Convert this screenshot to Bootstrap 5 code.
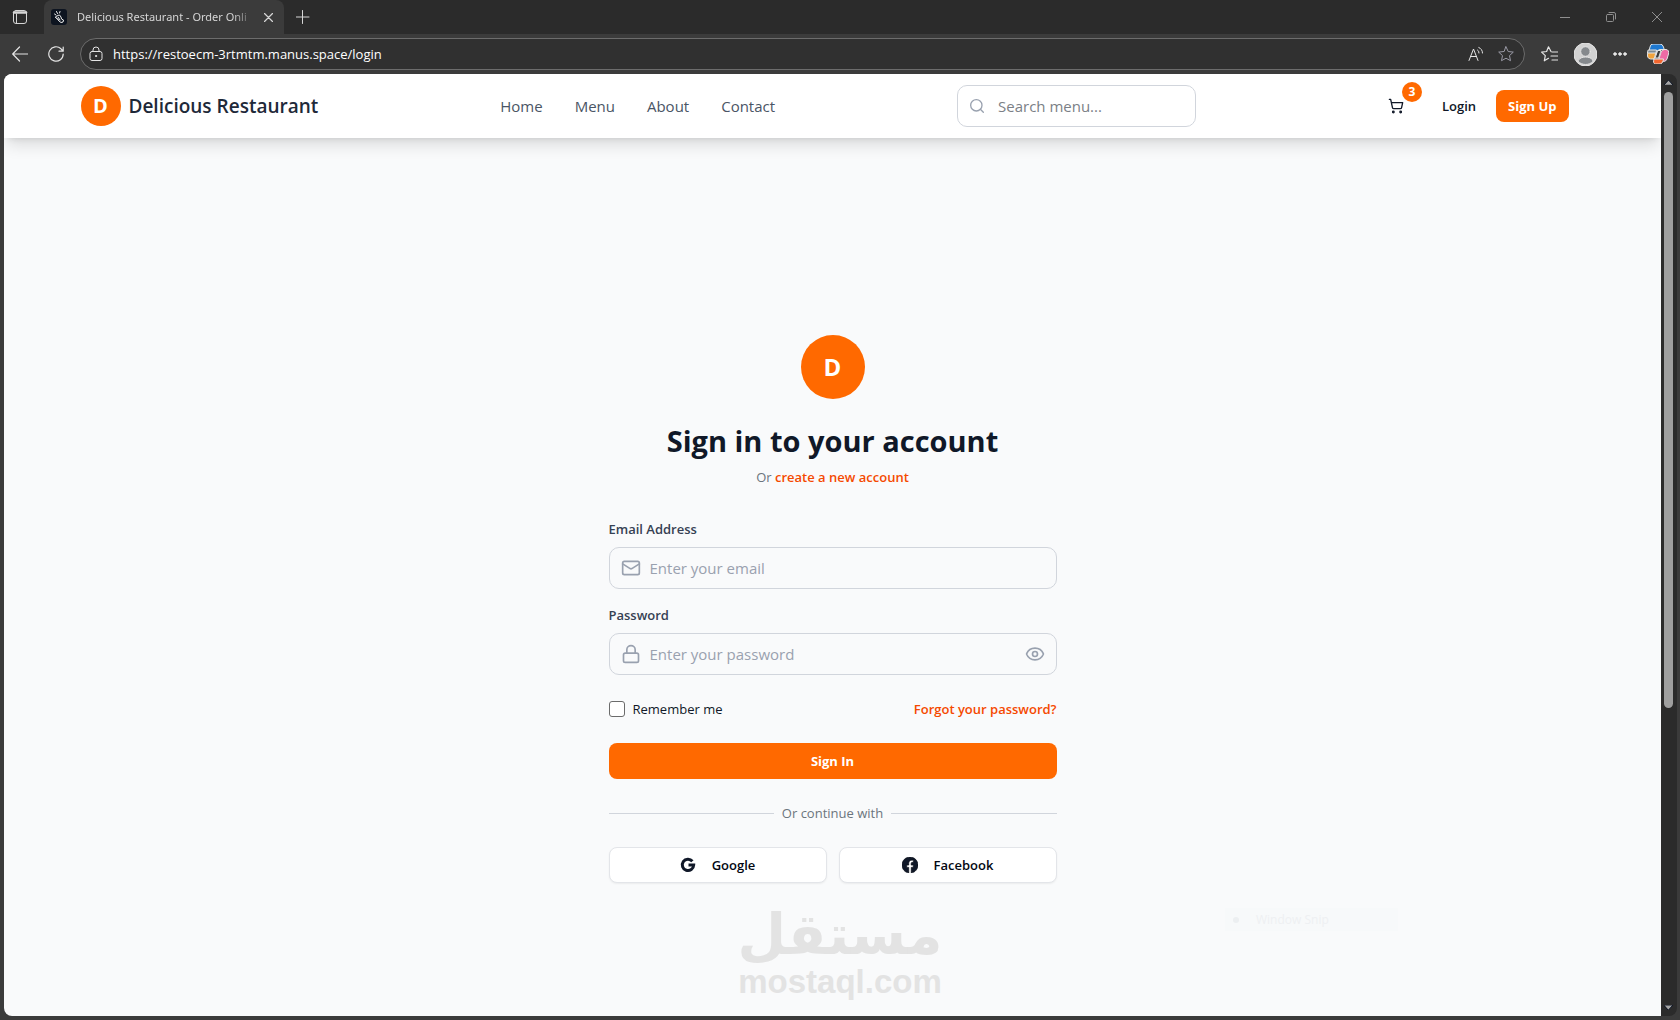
<!DOCTYPE html>
<html lang="en">
<head>
<meta charset="utf-8">
<meta name="viewport" content="width=device-width, initial-scale=1">
<title>Delicious Restaurant - Order Online</title>
<link href="https://cdn.jsdelivr.net/npm/bootstrap@5.3.0/dist/css/bootstrap.min.css" rel="stylesheet">
<style>
:root{--brand:#ff6900;--ink:#101828;--muted-ink:#99a1af;--line:#d1d5dc;}
body{font-family:"Open Sans","Noto Sans",sans-serif;font-size:13px;line-height:20px;color:var(--ink);background:#3b3b3b;height:100vh;overflow:hidden}
svg{display:block;flex:none;fill:none;stroke:currentColor;stroke-linecap:round;stroke-linejoin:round}
button.plain{background:none;border:0;padding:0;color:inherit}
.tabstrip{height:34px;background:#2b2b2b;color:#d6d6d6;padding-left:12px;padding-right:18px}
.tab-item{width:240px;height:34px;background:#3b3b3b;border-radius:8px 8px 0 0;margin-left:16px;padding:0 11px 0 7px;gap:10px}
.tab-title{font-family:"Noto Sans",sans-serif;font-size:11px;white-space:nowrap;-webkit-mask:linear-gradient(90deg,#000 88%,transparent);mask:linear-gradient(90deg,#000 88%,transparent)}
.win-btns{gap:36px;color:#8f8f8f}
.toolbar{height:40px;color:#e4e4e4;padding:0 11px 0 12px}
.address{height:32px;border:1px solid #6c6c6c;border-radius:16px;background:#303030;padding:0 10px 0 8px;margin-left:16px;margin-right:16px;gap:10px}
.address input{background:none;border:0;outline:0;color:#fff;font-size:13px;padding:0}
.viewport{margin:0 3px 4px 4px;border-radius:8px;overflow:hidden;background:#2b2b2b}
.page{background:#f9fafb;overflow:hidden}
.site-header{height:64px;background:#fff;box-shadow:0 10px 15px -3px rgba(0,0,0,.12),0 4px 6px -4px rgba(0,0,0,.12);z-index:2}
.site-inner{max-width:1536px;padding:0 16px}
.logo-dot{width:40px;height:40px;background:var(--brand);color:#fff;font-weight:700;font-size:20px}
.logo-dot.big{width:64px;height:64px;font-size:24px}
.brand-name{font-size:19px;line-height:28px;font-weight:600;color:#1e2939}
.main-nav{gap:32px;font-size:15px;line-height:24px}
.main-nav a{color:#4a5565;text-decoration:none}
.field{position:relative}
.field>svg{position:absolute;left:12px;top:11px;color:var(--muted-ink)}
.field .form-control{height:42px;border:1px solid var(--line);border-radius:10px;background:transparent;font-size:15px;padding:8px 40px;color:var(--ink)}
.field .form-control::placeholder{color:var(--muted-ink);opacity:1}
.search{width:239px}
.search>svg{top:13px}
.search .form-control::placeholder{color:#7b7f86}
.eye{position:absolute;right:12px;top:11px}
.eye svg{color:var(--muted-ink)}
.cart{position:relative;width:36px;height:36px}
.cart-count{position:absolute;right:-8px;top:-6px;width:20px;height:20px;background:var(--brand);color:#fff;font-size:12px;font-weight:700;line-height:20px}
.small-btn{font-size:13px;font-weight:600;line-height:20px;padding:6px 12px;border:0;border-radius:8px}
.text-ink{color:var(--ink)}
.btn-brand,.btn-brand:hover{background:var(--brand);color:#fff;font-weight:700}
.login-main{height:100%;flex:none}
.login-box{width:100%;max-width:448px}
.login-box h1{font-size:29px;line-height:36px;font-weight:700;margin:24px 0 8px}
.accent{color:#f54900;font-weight:600;text-decoration:none}
.login-box label.cap{font-weight:600;color:#364153;margin-bottom:8px}
.login-box .tick{width:16px;height:16px;margin:0;border:1px solid #6b6b6b;border-radius:3px}
.rule{height:1px;background:var(--line)}
.socials{gap:12px}
.social{height:36px;border:1px solid #e3e5e9;border-radius:8px;background:#fff;font-size:13px;font-weight:600;box-shadow:0 1px 2px rgba(0,0,0,.06);gap:16px;color:#030712}
.watermark{position:absolute;left:716px;top:830px;width:240px;color:#e3e3e3;text-align:center}
.wm-ar{font-family:"DejaVu Sans",sans-serif;font-weight:700;font-size:56px;line-height:62px}
.wm-en{font-family:"Liberation Sans",sans-serif;font-weight:700;font-size:33px;line-height:32px}
.snip{position:absolute;left:1221px;top:834px;width:173px;height:23px;background:#f7f9fa;color:#eef0f2;font-size:12px;padding-left:7px;gap:16px}
.scrollbar-col{width:16px;padding:6px 1px 6px 0}
.thumb{width:9px;height:616px;background:#9f9f9f;border-radius:5px;margin-top:7px}
</style>
<script src="https://cdn.jsdelivr.net/npm/bootstrap@5.3.0/dist/js/bootstrap.bundle.min.js"></script>
</head>
<body class="d-flex flex-column">
<div class="tabstrip d-flex align-items-center">
  <button class="plain" aria-label="Tab actions"><svg width="16" height="16" viewBox="0 0 16 16"><rect x="1.5" y="1.5" width="13" height="13" rx="2.5"/><path d="M2 3.500h12" stroke-width="2.500"/><path d="M4.500 5v9.500"/></svg></button>
  <div class="tab-item d-flex align-items-center">
    <svg width="16" height="16" viewBox="0 0 16 16"><rect width="16" height="16" rx="3" fill="#0d1420" stroke="none"/><path d="M3.500 5l1.500 1M5.500 2.500l1 2M9 2.500L8.500 4M4.500 8l2-1.500 2-.5 1.500 2 .5 2 2 1-.5 2-2 .5-2-1.500-1.500-2zM7 8l2 3M5.500 9l2 2" stroke="#eee"/></svg>
    <span class="tab-title flex-fill">Delicious Restaurant - Order Onli</span>
    <button class="plain" aria-label="Close tab"><svg width="9" height="9" viewBox="0 0 9 9"><path d="M.5.5l8 8M8.5.5l-8 8" stroke-width="1.2"/></svg></button>
  </div>
  <button class="plain ms-2" aria-label="New tab"><svg class="mx-1" width="14" height="14" viewBox="0 0 14 14"><path d="M6.500 .5v13M0 7h13"/></svg></button>
  <div class="win-btns d-flex ms-auto">
    <button class="plain" aria-label="Minimize"><svg width="10" height="10" viewBox="0 0 10 10"><path d="M0 5.500h10"/></svg></button>
    <button class="plain" aria-label="Restore"><svg width="10" height="10" viewBox="0 0 10 10"><rect x=".5" y="2.500" width="7" height="7" rx="1"/><path d="M3 .5h5a1.500 1.500 0 0 1 1.500 1.500v5"/></svg></button>
    <button class="plain" aria-label="Close"><svg width="10" height="10" viewBox="0 0 10 10"><path d="M0 0l10 10M10 0L0 10"/></svg></button>
  </div>
</div>
<div class="toolbar d-flex align-items-center">
  <button class="plain" aria-label="Back"><svg width="16" height="16" viewBox="0 0 16 16"><path d="M7.500 1L.7 8l6.800 7M1 8h15" stroke-width="1.200"/></svg></button>
  <button class="plain ms-3 ps-1" aria-label="Refresh"><svg width="16" height="16" viewBox="0 0 16 16"><path d="M15.200 8A7.200 7.200 0 1 1 13 2.800L15 5M15.200 1v4.200H11" stroke-width="1.200"/></svg></button>
  <div class="address d-flex align-items-center flex-fill">
    <svg width="14" height="16" viewBox="0 0 14 16"><rect x="1" y="5.500" width="12" height="9" rx="2"/><path d="M4 5.500V4a3 3 0 0 1 6 0v1.500"/><circle cx="7" cy="10" r=".6" fill="currentColor"/></svg>
    <input class="flex-fill" aria-label="Address" value="https://restoecm-3rtmtm.manus.space/login">
    <svg class="me-1" width="16" height="16" viewBox="0 0 16 16" stroke="#9a9a9a"><path d="M1 14.500L5.500 3 10 14.500M2.500 10.500h6M9.500 4a3 3 0 0 1 1.500 3M10.800 1.500A6 6 0 0 1 14.500 7" /></svg>
    <svg width="16" height="16" viewBox="0 0 16 16"><path d="M8 .8l2.200 4.700 5.100.6-3.800 3.500 1 5.100L8 12.200l-4.500 2.500 1-5.100L.7 6.100l5.100-.6z" stroke="#9a9aa6"/></svg>
  </div>
  <div class="d-flex align-items-center gap-3">
    <svg width="17" height="16" viewBox="0 0 17 16"><path d="M10 5.500L7.500.8 5.600 5.500l-5 .6 3.700 3.500-1 5.200 4.200-2.500M11 6h5.500M10 10h6.500M11 14h5.500" stroke-width="1.200"/></svg>
    <svg width="23" height="23" viewBox="0 0 23 23" stroke="none"><circle cx="11.500" cy="11.500" r="11.500" fill="#d2d2d2"/><circle cx="11.500" cy="8.500" r="4.800" fill="#85898d"/><path d="M4 18.500c0-6 15-6 15 0-4 4-11 4-15 0z" fill="#85898d"/></svg>
    <svg width="14" height="4" viewBox="0 0 14 4" stroke="none"><circle cx="2" cy="2" r="1.300" fill="#eee"/><circle cx="7" cy="2" r="1.300" fill="#eee"/><circle cx="12" cy="2" r="1.300" fill="#eee"/></svg>
    <svg class="ms-1" width="22" height="20" viewBox="0 0 22 20" stroke="none"><path d="M5 0h8q2.500 0 3.500 3l.7 2.500H13q-2 0-2.800 2L9 11H1L3 3q.7-3 2-3z" fill="#1e78d0"/><path d="M.8 8.500H9L7 15H3.500q-4.200-.5-2.700-6.500z" fill="#f0a23c"/><path d="M1.500 6h8L9 9H.7z" fill="#7d8a92"/><path d="M17 5.500h2q3.500.5 2.500 4.500l-1.500 5q-1 2.500-3.500 2.500H11l3-9q1-3 3-3z" fill="#ee6aa5"/><path d="M7 15h9.500q0 2-1.500 4-1 1-3 1H8.500Q5.500 19.500 7 15z" fill="#f4662e"/><path d="M11 6.500h3L11.500 14H8.500z" fill="#3b3b3b"/></svg>
  </div>
</div>
<div class="viewport d-flex flex-fill">
  <div class="page position-relative d-flex flex-column flex-fill">
    <header class="site-header flex-shrink-0">
      <div class="site-inner mx-auto h-100 d-flex align-items-center justify-content-between">
        <a href="#" class="d-flex align-items-center gap-2 text-decoration-none">
          <span class="logo-dot rounded-circle d-flex align-items-center justify-content-center">D</span>
          <span class="brand-name">Delicious Restaurant</span>
        </a>
        <nav class="main-nav d-flex" aria-label="Main"><a href="#">Home</a><a href="#">Menu</a><a href="#">About</a><a href="#">Contact</a></nav>
        <div class="field search">
          <svg width="16" height="16" viewBox="0 0 24 24" stroke-width="2"><circle cx="11" cy="11" r="8.500"/><path d="M21.500 21.500L17 17"/></svg>
          <input class="form-control" type="search" aria-label="Search menu" placeholder="Search menu...">
        </div>
        <div class="d-flex align-items-center gap-3 me-3">
          <button class="plain cart d-flex align-items-center justify-content-center" aria-label="Cart">
            <svg width="16" height="16" viewBox="0 0 24 24" stroke-width="2"><circle cx="8" cy="21" r="1.200"/><circle cx="19" cy="21" r="1.200"/><path d="M2 2h2l2.700 12.400a2 2 0 0 0 2 1.600h9.700a2 2 0 0 0 2-1.600L22 7H5.100"/></svg>
            <span class="cart-count rounded-circle">3</span>
          </button>
          <div class="d-flex gap-2">
            <button class="btn small-btn text-ink">Login</button>
            <button class="btn small-btn btn-brand">Sign Up</button>
          </div>
        </div>
      </div>
    </header>
    <main class="login-main d-flex align-items-center justify-content-center">
      <form class="login-box">
        <div class="text-center mb-4 pb-2">
          <span class="logo-dot big rounded-circle d-flex align-items-center justify-content-center mx-auto">D</span>
          <h1>Sign in to your account</h1>
          <div class="text-secondary">Or <a href="#" class="accent">create a new account</a></div>
        </div>
        <label class="cap d-block" for="email">Email Address</label>
        <div class="field mb-3">
          <svg width="20" height="20" viewBox="0 0 24 24" stroke-width="2"><rect x="2" y="4" width="20" height="16" rx="2"/><path d="M22 7l-9 5.700a2 2 0 0 1-2 0L2 7"/></svg>
          <input class="form-control" id="email" type="email" placeholder="Enter your email">
        </div>
        <label class="cap d-block" for="password">Password</label>
        <div class="field mb-4">
          <svg width="20" height="20" viewBox="0 0 24 24" stroke-width="2"><rect x="3" y="11" width="18" height="11" rx="2"/><path d="M7 11V7a5 5 0 0 1 10 0v4"/></svg>
          <input class="form-control" id="password" type="password" placeholder="Enter your password">
          <button type="button" class="plain eye" aria-label="Show password"><svg width="20" height="20" viewBox="0 0 24 24" stroke-width="2"><path d="M2 12.300a1 1 0 0 1 0-.7 10.800 10.800 0 0 1 20 0 1 1 0 0 1 0 .7 10.800 10.800 0 0 1-20 0z"/><circle cx="12" cy="12" r="3"/></svg></button>
        </div>
        <div class="d-flex align-items-center mb-4">
          <input class="form-check-input tick" id="remember" type="checkbox"><label class="ms-2" for="remember">Remember me</label>
          <a href="#" class="accent ms-auto">Forgot your password?</a>
        </div>
        <button type="submit" class="btn small-btn btn-brand w-100 py-2">Sign In</button>
        <div class="d-flex align-items-center gap-2 my-4 text-secondary"><span class="rule flex-fill"></span>Or continue with<span class="rule flex-fill"></span></div>
        <div class="row g-0 socials">
          <div class="col"><button type="button" class="social w-100 d-flex align-items-center justify-content-center"><svg width="16" height="16" viewBox="0 0 16 16"><path d="M12.400 4.200A5.700 5.700 0 1 0 13.700 8H8.500" stroke="#101828" stroke-width="3" stroke-linecap="butt" stroke-linejoin="miter"/></svg>Google</button></div>
          <div class="col"><button type="button" class="social w-100 d-flex align-items-center justify-content-center"><svg width="16" height="16" viewBox="0 0 24 24" stroke="none"><path d="M24 12.100C24 5.400 18.600 0 12 0S0 5.400 0 12.100c0 6 4.400 11 10.100 11.900v-8.400H7.100v-3.500h3V9.400c0-3 1.800-4.700 4.500-4.700 1.300 0 2.700.2 2.700.2v3h-1.500c-1.500 0-2 .9-2 1.900v2.300h3.400l-.5 3.500h-2.800V24C19.600 23.100 24 18.100 24 12.100z" fill="#101828"/></svg>Facebook</button></div>
        </div>
      </form>
    </main>
    <div class="watermark"><div class="wm-ar" lang="ar" dir="rtl">مستقل</div><div class="wm-en">mostaql.com</div></div>
    <div class="snip d-flex align-items-center"><svg width="8" height="8" viewBox="0 0 8 8"><circle cx="4" cy="4" r="3" fill="#eceff1" stroke="none"/></svg>Window Snip</div>
  </div>
  <div class="scrollbar-col d-flex flex-column align-items-center">
    <svg width="9" height="5" viewBox="0 0 9 5" stroke="none"><path d="M0 5L4.500 0 9 5z" fill="#a5a5a5"/></svg>
    <div class="thumb"></div>
    <svg class="mt-auto" width="9" height="5" viewBox="0 0 9 5" stroke="none"><path d="M0 0h9L4.500 5z" fill="#a5a5a5"/></svg>
  </div>
</div>
</body>
</html>
